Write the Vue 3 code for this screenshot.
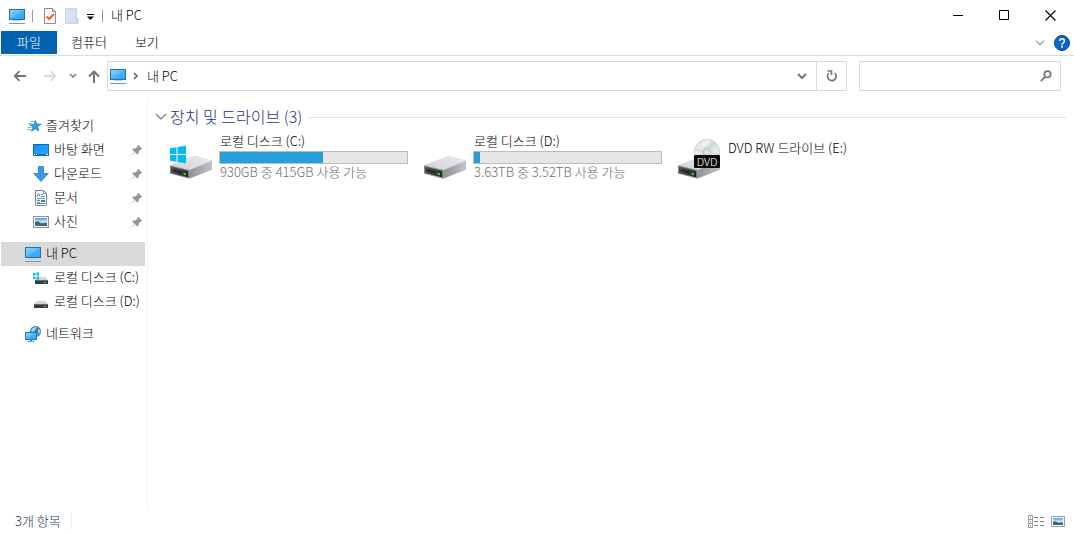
<script setup>
import { ref } from 'vue'

const query = ref('')

const favorites = [
  { label: '바탕 화면', icon: 'desktop' },
  { label: '다운로드', icon: 'download' },
  { label: '문서', icon: 'document' },
  { label: '사진', icon: 'picture' }
]

const disks = [
  { label: '로컬 디스크 (C:)', icon: 'disk-win-small' },
  { label: '로컬 디스크 (D:)', icon: 'disk-small' }
]

const drives = [
  { label: '로컬 디스크 (C:)', icon: 'drive-win', used: 55, note: '930GB 중 415GB 사용 가능' },
  { label: '로컬 디스크 (D:)', icon: 'drive', used: 3, note: '3.63TB 중 3.52TB 사용 가능' },
  { label: 'DVD RW 드라이브 (E:)', icon: 'drive-dvd', badge: 'DVD' }
]
</script>

<template>
  <div class="explorer">
    <svg class="defs" aria-hidden="true">
      <defs>
        <linearGradient id="g-screen" x1="0" y1="0" x2="1" y2="1">
          <stop offset="0" stop-color="#8bd3ff" />
          <stop offset=".5" stop-color="#55bcff" />
          <stop offset=".52" stop-color="#3db0ff" />
          <stop offset="1" stop-color="#35a6fb" />
        </linearGradient>
        <linearGradient id="g-desk" x1="0" y1="0" x2="1" y2="1">
          <stop offset="0" stop-color="#0c8cf5" />
          <stop offset=".5" stop-color="#1e9bff" />
          <stop offset="1" stop-color="#30a6ff" />
        </linearGradient>
        <linearGradient id="g-top" x1="0" y1="1" x2="1" y2="0">
          <stop offset="0" stop-color="#cfd0d2" />
          <stop offset="1" stop-color="#ececee" />
        </linearGradient>
        <linearGradient id="g-side" x1="0" y1="0" x2="1" y2="0">
          <stop offset="0" stop-color="#8c8e91" />
          <stop offset="1" stop-color="#c2c4c7" />
        </linearGradient>
        <linearGradient id="g-front" x1="0" y1="0" x2="1" y2="1">
          <stop offset="0" stop-color="#555" />
          <stop offset="1" stop-color="#1d1f20" />
        </linearGradient>
        <linearGradient id="g-photo" x1="0" y1="0" x2="0" y2="1">
          <stop offset="0" stop-color="#4d94e4" />
          <stop offset=".5" stop-color="#d3ecff" />
          <stop offset=".75" stop-color="#4b8194" />
          <stop offset="1" stop-color="#2d5f86" />
        </linearGradient>
        <linearGradient id="g-disc" x1="0" y1="0" x2="1" y2="1">
          <stop offset="0" stop-color="#c9cdd0" />
          <stop offset=".3" stop-color="#f3f4f5" />
          <stop offset=".45" stop-color="#d9d3e2" />
          <stop offset=".55" stop-color="#d0e9df" />
          <stop offset=".75" stop-color="#f4f5f5" />
          <stop offset="1" stop-color="#c6cacc" />
        </linearGradient>
      </defs>
      <symbol id="pc" viewBox="0 0 16 16">
        <rect x="0" y="1" width="16" height="11" fill="#28719f" />
        <rect x="1" y="2" width="14" height="9" fill="url(#g-screen)" />
        <rect x="4" y="12" width="8" height="1" fill="#b8cddd" />
        <rect x="0" y="15" width="16" height="1" fill="#7797ae" />
      </symbol>
      <symbol id="desktop" viewBox="0 0 16 16">
        <rect x="0" y="2" width="16" height="12" fill="#0870bd" />
        <rect x="1" y="3" width="14" height="9" fill="url(#g-desk)" />
        <path d="M1 12.5h1M3 12.5h1M13 12.5h2" stroke="#fff" />
      </symbol>
      <symbol id="download" viewBox="0 0 16 16">
        <path d="M5.5.5h5v7h4.8L8 15.5.7 7.5h4.8z" fill="#3e97e6" stroke="#2a7bc6" stroke-width=".8" />
      </symbol>
      <symbol id="document" viewBox="0 0 16 16">
        <path d="M2.5.5h8l3 3v12h-11z" fill="#fff" stroke="#7e858b" />
        <path d="M10.5.5v3h3" fill="none" stroke="#7e858b" />
        <path d="M8 4.5h2M8 6.5h4M4 8.5h8M4 10.5h3M4 12.5h3" stroke="#55a2dd" />
        <path d="M4 6.5l1.5-3 1.5 3M4 10.5h3M4 13.5h8" fill="none" stroke="#338bcf" />
        <rect x="8" y="10" width="4" height="2" fill="#387bb2" />
      </symbol>
      <symbol id="picture" viewBox="0 0 16 16">
        <rect x=".5" y="2.5" width="15" height="11" fill="#fff" stroke="#8c9298" />
        <rect x="2" y="4" width="12" height="8" fill="url(#g-photo)" />
        <path d="M2 8q3-2 6 1.5L14 9v1.5H2z" fill="#3f6b55" />
      </symbol>
      <symbol id="star" viewBox="0 0 16 16">
        <path d="M9.500 2.500l1.300 3.500 4.200.1-3.300 2.500 1.100 4.400-3.600-2.100-3.700 2.300 1.400-4.300-2.800-2.200 3.900-.3z" fill="#2b9fee" stroke="#1a7ac4" stroke-width=".7" />
        <path d="M5 3.500h3M2.500 5.500h3M3 7.500h3M1.500 9.500h4M1 11.500h4" stroke="#4aaae8" stroke-width=".8" />
      </symbol>
      <symbol id="disk-small" viewBox="0 0 16 16">
        <path d="M4 7h8l3 3H1z" fill="#d0d2d4" />
        <rect x="1" y="10" width="14" height="4" rx=".5" fill="#37393b" />
        <path d="M1 10.500h14" stroke="#65686a" />
        <rect x="11" y="12" width="2" height="1" fill="#2de03a" />
      </symbol>
      <symbol id="disk-win-small" viewBox="0 0 16 16">
        <path d="M5 7h7l3 3H2z" fill="#d0d2d4" />
        <rect x="2" y="10" width="13" height="4" rx=".5" fill="#37393b" />
        <path d="M2 10.500h13" stroke="#65686a" />
        <rect x="11" y="12" width="2" height="1" fill="#2de03a" />
        <path d="M0 3h2.500v2.500H0zM3.500 2.500H6v3H3.500zM0 6.500h2.500V9H0zM3.500 6.500H6v3H3.500z" fill="#00bcf2" />
      </symbol>
      <symbol id="network" viewBox="0 0 16 16">
        <circle cx="10.500" cy="5.500" r="5.500" fill="#3b80ad" />
        <path d="M7 2.500q2-2 5-1.500l-1.500 2.500L8 6 6 5zM13 3l2 1v4l-2-1.500zM11 7l2 1-1 2z" fill="#9ed2ee" />
        <path d="M0 6h12v8H0z" fill="#1c78b4" />
        <path d="M1 7h10v6H1z" fill="url(#g-screen)" />
        <path d="M5 14.500h2M2.500 15.500h7" stroke="#5d9dc6" />
      </symbol>
      <symbol id="pin" viewBox="0 0 12 12">
        <path d="M7 .8l4.300 4.200-1 .6-.8-.1-2 2 .1 2-1.200 1.100-2.300-2.300L.8 11.500l-.3-.3 3.200-3.300-2.300-2.300L2.500 4.500l2 .1 2-2-.1-1z" fill="#89959f" />
      </symbol>
      <symbol id="drive" viewBox="0 0 44 44">
        <path d="M1 26.500L26 17l17 5v8.500L21 39.500 1 34.500z" fill="#a6a8aa" />
        <path d="M1 26.500L26 17l17 5-22 9z" fill="url(#g-top)" />
        <path d="M21 31l22-9v8.500L19 39.500z" fill="url(#g-side)" />
        <path d="M1 26.500L20 31v8.500L1 34.500z" fill="#8a8a8a" />
        <path d="M2 27.500l17.200 4.400v6.300L2 33.800z" fill="url(#g-front)" />
        <path d="M14.500 33.800l2.500.6v1.800l-2.500-.5z" fill="#31e52d" />
        <path d="M4 31l8 2.300" stroke="#111" />
      </symbol>
      <symbol id="drive-win" viewBox="0 0 44 44">
        <use href="#drive" width="44" height="44" />
        <path d="M1 9.200l6.500-1V15H1zM8.500 8L17 6.800V15H8.500zM1 16h6.500v6.800l-6.500-1zM8.500 16H17v8.200L8.500 23z" fill="#00bcf2" />
      </symbol>
      <symbol id="drive-dvd" viewBox="0 0 44 44">
        <use href="#drive" width="44" height="44" />
        <circle cx="30" cy="13" r="12.500" fill="url(#g-disc)" stroke="#b6babc" stroke-width=".7" />
        <path d="M30 13L19 8l2-4zM30 13l11 5-2 4z" fill="#d6f0e3" />
        <path d="M30 13L18 12v-3zM30 13l12 1v3z" fill="#e6cfe8" />
        <circle cx="30" cy="13" r="3.800" fill="#dcdfe0" stroke="#b1b5b7" stroke-width=".8" />
        <circle cx="30" cy="13" r="1.500" fill="#fff" stroke="#a9adaf" stroke-width=".5" />
      </symbol>
    </svg>

    <header class="titlebar">
      <svg class="i16"><use href="#pc" /></svg>
      <span class="bar"></span>
      <button class="plain" aria-label="속성">
        <svg width="14" height="16" viewBox="0 0 14 16">
          <path d="M1.500.5h8l3 3v12h-11z" fill="#fafafa" stroke="#8d8d8d" />
          <path d="M9.500.5v3h3" fill="none" stroke="#8d8d8d" />
          <path d="M3.500 8.500l2.500 2.500 5-5" fill="none" stroke="#f2622e" stroke-width="2" />
        </svg>
      </button>
      <button class="plain folder" aria-label="새 폴더">
        <svg width="14" height="16" viewBox="0 0 14 16">
          <path d="M.5.5h11v10h1.500v5H.5z" fill="#d5e0f2" stroke="#c6d3e9" />
          <path d="M11.500 11v4" stroke="#b9c9e4" />
        </svg>
      </button>
      <button class="plain more" aria-label="빠른 실행 도구 모음 사용자 지정">
        <svg width="7" height="6" viewBox="0 0 7 6">
          <path d="M0 .5h7" stroke="#000" />
          <path d="M0 2.500h7L3.500 6z" fill="#000" />
        </svg>
      </button>
      <span class="bar last"></span>
      <h1>내 PC</h1>
      <div class="window-buttons">
        <button class="plain" aria-label="최소화">
          <svg width="10" height="11" viewBox="0 0 10 11"><path d="M0 5.500h10" stroke="#000" /></svg>
        </button>
        <button class="plain" aria-label="최대화">
          <svg width="11" height="11" viewBox="0 0 11 11"><path d="M.5.5h9v9h-9z" fill="none" stroke="#000" /></svg>
        </button>
        <button class="plain" aria-label="닫기">
          <svg width="11" height="11" viewBox="0 0 11 11"><path d="M.5.5l10 10M10.500.5l-10 10" stroke="#000" stroke-width="1.100" /></svg>
        </button>
      </div>
    </header>

    <nav class="ribbon" aria-label="리본">
      <button class="plain tab file">파일</button>
      <button class="plain tab">컴퓨터</button>
      <button class="plain tab">보기</button>
      <div class="ribbon-end">
        <button class="plain" aria-label="리본 확장">
          <svg width="10" height="6" viewBox="0 0 10 6"><path d="M1 .8l4 4 4-4" fill="none" stroke="#a0a0a0" stroke-width="1.300" /></svg>
        </button>
        <button class="plain" aria-label="도움말">
          <svg width="16" height="16" viewBox="0 0 16 16">
            <circle cx="8" cy="8" r="7.500" fill="#0568c8" stroke="#07477f" />
            <path d="M5.800 6q0-2.200 2.300-2.200T10.400 6q0 1-1.200 1.800T8 9.800" fill="none" stroke="#fff" stroke-width="1.600" />
            <path d="M7.100 10.800h1.900v1.700H7.100z" fill="#fff" />
          </svg>
        </button>
      </div>
    </nav>

    <div class="navrow">
      <button class="plain nb" aria-label="뒤로">
        <svg width="14" height="12" viewBox="0 0 14 12"><path d="M13 6H2M6.500 1.200L1.700 6l4.800 4.800" fill="none" stroke="#757575" stroke-width="1.800" /></svg>
      </button>
      <button class="plain nb" aria-label="앞으로">
        <svg width="14" height="12" viewBox="0 0 14 12"><path d="M1 6h11M7.500 1.200L12.300 6l-4.800 4.800" fill="none" stroke="#dadada" stroke-width="1.800" /></svg>
      </button>
      <button class="plain nb recent" aria-label="최근 위치">
        <svg width="8" height="6" viewBox="0 0 8 6"><path d="M1 1l3 3 3-3" fill="none" stroke="#858585" stroke-width="1.600" /></svg>
      </button>
      <button class="plain nb up" aria-label="위로">
        <svg width="12" height="13" viewBox="0 0 12 13"><path d="M6 13V2M1 6.500l5-5 5 5" fill="none" stroke="#757575" stroke-width="2" /></svg>
      </button>
      <div class="address">
        <svg class="i16"><use href="#pc" /></svg>
        <svg class="crumb" width="5" height="8" viewBox="0 0 5 8"><path d="M1 1l3 3-3 3" fill="none" stroke="#666" stroke-width="1.600" /></svg>
        <span class="path">내 PC</span>
        <button class="plain drop" aria-label="이전 위치">
          <svg width="10" height="7" viewBox="0 0 10 7"><path d="M1 1l4 4 4-4" fill="none" stroke="#757575" stroke-width="2" /></svg>
        </button>
        <button class="plain refresh" aria-label="새로 고침">
          <svg width="12" height="12" viewBox="0 0 12 12">
            <path d="M2.800 3.300A4.300 4.300 0 1 0 8.800 3.200" fill="none" stroke="#757575" stroke-width="1.700" />
            <path d="M1.500 1h4v4" fill="none" stroke="#757575" stroke-width="1.600" />
          </svg>
        </button>
      </div>
      <div class="search">
        <input v-model="query" type="text" aria-label="내 PC 검색" />
        <svg width="12" height="12" viewBox="0 0 12 12"><circle cx="7.500" cy="4.300" r="3.200" fill="none" stroke="#757575" stroke-width="1.700" /><path d="M5.200 6.800L.8 11.200" stroke="#757575" stroke-width="1.900" /></svg>
      </div>
    </div>

    <div class="content">
      <aside class="sidebar">
        <a href="#" class="row star-row"><svg class="i16"><use href="#star" /></svg><span>즐겨찾기</span></a>
        <a v-for="f in favorites" :key="f.label" href="#" class="row sub">
          <svg class="i16"><use :href="'#' + f.icon" /></svg><span>{{ f.label }}</span>
          <svg class="pin"><use href="#pin" /></svg>
        </a>
        <a href="#" class="row selected group" aria-current="page"><svg class="i16"><use href="#pc" /></svg><span>내 PC</span></a>
        <a v-for="d in disks" :key="d.label" href="#" class="row sub">
          <svg class="i16"><use :href="'#' + d.icon" /></svg><span>{{ d.label }}</span>
        </a>
        <a href="#" class="row group"><svg class="i16"><use href="#network" /></svg><span>네트워크</span></a>
      </aside>

      <main>
        <h2>
          <svg width="12" height="8" viewBox="0 0 12 8"><path d="M1 1l5 5 5-5" fill="none" stroke="#777" stroke-width="1.200" /></svg>
          <span>장치 및 드라이브 (3)</span>
        </h2>
        <ul class="drives">
          <li v-for="d in drives" :key="d.label" class="drive">
            <div class="drive-icon">
              <svg width="44" height="44"><use :href="'#' + d.icon" /></svg>
              <span v-if="d.badge" class="badge">{{ d.badge }}</span>
            </div>
            <div class="info" :class="{ bare: !d.note }">
              <p>{{ d.label }}</p>
              <template v-if="d.note">
                <div class="meter" role="progressbar" :aria-label="d.label" :aria-valuenow="d.used">
                  <div class="fill" :style="{ width: d.used + '%' }"></div>
                </div>
                <p class="note">{{ d.note }}</p>
              </template>
            </div>
          </li>
        </ul>
      </main>
    </div>

    <footer class="status">
      <span>3개 항목</span>
      <div class="views">
        <button class="plain" aria-label="자세히">
          <svg width="16" height="13" viewBox="0 0 16 13">
            <path d="M.5.5h4v12h-4zM.5 4.500h4M.5 8.500h4" fill="#fff" stroke="#9a9a9a" />
            <path d="M6 2.500h4M12 2.500h4M6 6.500h4M12 6.500h4M6 10.500h4M12 10.500h4" stroke="#7d7d7d" />
            <path d="M2 2.500h1" stroke="#289061" /><path d="M2 6.500h1" stroke="#3682ef" /><path d="M2 10.500h1" stroke="#e22" />
          </svg>
        </button>
        <button class="plain" aria-label="큰 아이콘">
          <svg width="14" height="11" viewBox="0 0 14 11">
            <path d="M.5.5h13v10H.5z" fill="#fff" stroke="#9a9a9a" />
            <path d="M2 2h10v7H2z" fill="url(#g-photo)" />
            <path d="M2 6q3-2 5 1l5-.5V8H2z" fill="#3f6b55" />
          </svg>
        </button>
      </div>
    </footer>
  </div>
</template>

<style>
body {
  margin: 0;
  background: #fff;
}
</style>

<style scoped>
.explorer {
  display: flex;
  flex-direction: column;
  min-height: 100vh;
  background: #fff;
  color: #000;
  font: 300 13px/18px "Noto Sans CJK KR", sans-serif;
}
.explorer * {
  box-sizing: border-box;
}
.defs {
  position: absolute;
  width: 0;
  height: 0;
}
svg {
  display: block;
  flex: none;
}
h1,
h2,
p,
ul {
  margin: 0;
  padding: 0;
  font: inherit;
}
.plain {
  display: flex;
  align-items: center;
  justify-content: center;
  padding: 0;
  border: 0;
  background: none;
  color: inherit;
  font: inherit;
}
.i16 {
  width: 16px;
  height: 16px;
}
.titlebar {
  display: flex;
  align-items: center;
  height: 31px;
  padding: 0 1px 0 9px;
}
.titlebar h1 {
  padding-bottom: 2px;
}
.bar {
  width: 1px;
  height: 12px;
  margin: 0 10px 0 7px;
  background: #9b9b9b;
}
.folder {
  margin-left: 8px;
}
.more {
  margin: 2px 8px 0;
}
.bar.last {
  margin: 0 8px 0 0;
}
.window-buttons {
  display: flex;
  margin-left: auto;
}
.window-buttons .plain {
  width: 46px;
  height: 30px;
}
.ribbon {
  display: flex;
  height: 25px;
  padding-left: 1px;
  border-bottom: 1px solid #dadbdc;
}
.tab {
  height: 23px;
  padding: 0 14px 2px;
}
.tab.file {
  width: 56px;
  background: #0063b1;
  color: #fff;
}
.ribbon-end {
  display: flex;
  align-items: center;
  gap: 9px;
  margin-left: auto;
  padding-right: 4px;
}
.navrow {
  display: flex;
  align-items: center;
  height: 41px;
  padding: 0 13px 1px;
}
.nb {
  width: 14px;
  height: 24px;
  margin-right: 16px;
}
.nb.recent {
  width: 8px;
  margin: 0 10px 0 -4px;
}
.nb.up {
  width: 14px;
  margin: 0 6px 0 0;
}
.address {
  display: flex;
  flex: 1;
  align-items: center;
  height: 30px;
  padding-left: 2px;
  border: 1px solid #d9d9d9;
}
.crumb {
  margin: 0 9px 0 7px;
}
.drop {
  width: 28px;
  height: 28px;
  margin-left: auto;
}
.refresh {
  width: 30px;
  height: 28px;
  border-left: 1px solid #d9d9d9;
}
.search {
  display: flex;
  align-items: center;
  width: 202px;
  height: 30px;
  margin-left: 12px;
  padding-right: 8px;
  border: 1px solid #d9d9d9;
}
.search input {
  flex: 1;
  min-width: 0;
  height: 28px;
  padding: 0 8px;
  border: 0;
  outline: 0;
  background: none;
  font: inherit;
}
.content {
  display: flex;
  flex: 1;
}
.sidebar {
  width: 148px;
  padding: 17px 2px 0 1px;
  border-right: 1px solid #f3f3f3;
}
.row {
  display: flex;
  align-items: center;
  gap: 5px;
  height: 24px;
  padding-left: 24px;
  color: #000;
  text-decoration: none;
  white-space: nowrap;
}
.row span,
h2 span {
  padding-bottom: 2px;
}
.star-row {
  gap: 4px;
  padding-left: 25px;
}
.sub {
  padding-left: 32px;
}
.group {
  margin-top: 8px;
}
.selected {
  background: #d9d9d9;
}
.pin {
  width: 12px;
  height: 12px;
  margin: 0 2px 0 auto;
}
main {
  flex: 1;
  min-width: 0;
  padding: 8px 8px 0 7px;
}
h2 {
  display: flex;
  align-items: center;
  gap: 3px;
  height: 24px;
  color: #1e3287;
  font-size: 16px;
}
h2::after {
  flex: 1;
  height: 1px;
  margin-left: 4px;
  background: #e2e2e2;
  content: "";
}
.drives {
  display: flex;
  flex-wrap: wrap;
  padding-left: 14px;
  list-style: none;
}
.drive {
  display: flex;
  gap: 6px;
  width: 254px;
  padding-top: 3px;
}
.drive-icon {
  position: relative;
  width: 44px;
  height: 44px;
  margin-top: 7px;
}
.badge {
  position: absolute;
  top: 16px;
  left: 17px;
  width: 26px;
  border-radius: 1px;
  background: #0c0c0c;
  color: #fff;
  font-size: 11px;
  line-height: 13px;
  text-align: center;
}
.info {
  width: 189px;
}
.info p {
  padding-left: 1px;
}
.info.bare {
  padding-top: 7px;
}
.meter {
  height: 13px;
  margin: 1px 0 0;
  border: 1px solid #bcbcbc;
  background: #e6e6e6;
}
.fill {
  height: 100%;
  background: #26a0da;
}
.note {
  color: #6d6d6d;
  line-height: 16px;
}
.status {
  display: flex;
  align-items: center;
  justify-content: space-between;
  height: 26px;
  padding: 0 9px 0 15px;
  color: #1e395b;
}
.status span {
  padding-right: 10px;
  border-right: 1px solid #f0f0f0;
}
.views {
  display: flex;
  align-items: center;
  gap: 7px;
}
</style>
